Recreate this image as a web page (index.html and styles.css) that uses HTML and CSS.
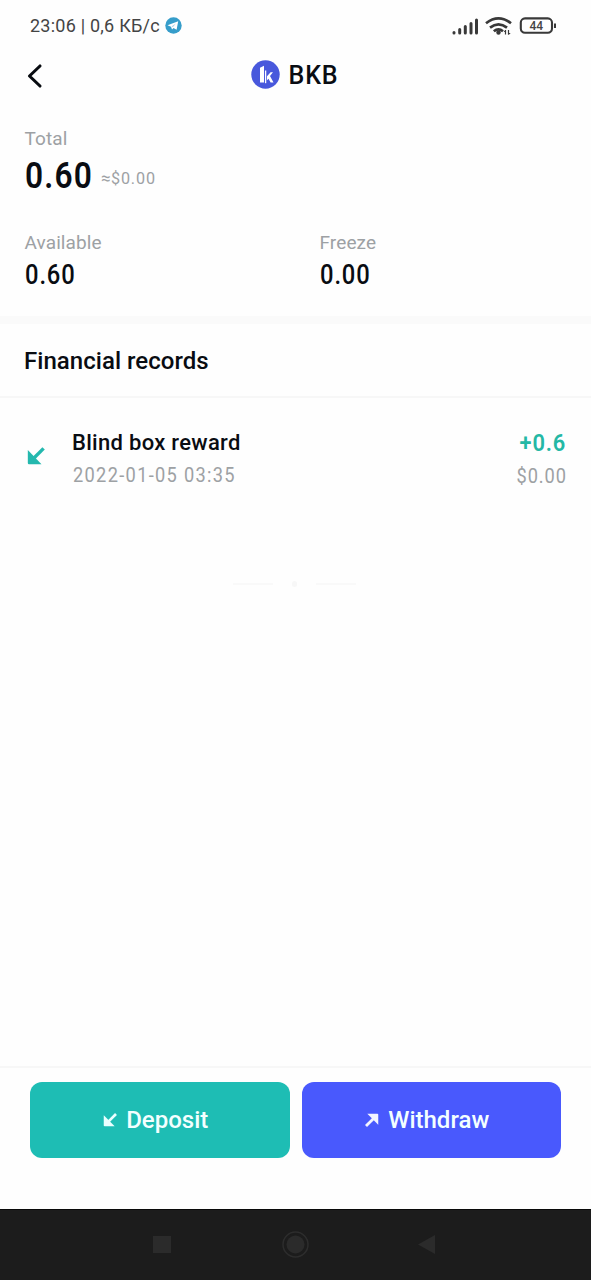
FILE: index.html
```html
<!DOCTYPE html>
<html lang="en">
<head>
<meta charset="utf-8">
<title>BKB</title>
<link rel="stylesheet" href="styles.css">
</head>
<body>
<div class="screen">
  <div class="status">
    <span class="status-text">23:06 | 0,6 КБ/с</span>
    <svg class="telegram" width="17" height="17" viewBox="0 0 17 17"><circle cx="8.5" cy="8.5" r="8.2" fill="#369dca"/><path d="M2.5 8.3 13.2 4.2 11.6 12.8 8.5 10.9 7 12.4 6 9.7Z" fill="#fff"/><path d="M6.5 9.5 10.8 6.5 8 10Z" fill="#a6cfe4"/></svg>
    <svg class="signals" width="108" height="22" viewBox="0 0 108 22">
      <g stroke="#393939" stroke-width="3" stroke-linecap="round"><path d="M3 17.5v.5M8.7 14.5V18M14.3 11.5V18M20 8.5V18M25.5 5V18"/></g>
      <g fill="none" stroke="#393939" stroke-width="2.7"><path d="M35 8.2Q47.5-1.4 60 8.2M39 12.6Q47.5 6 56 12.6M42.8 16.2Q47.5 12.5 52 16.2"/></g>
      <circle cx="47.5" cy="17.5" r="2.2" fill="#393939"/>
      <path d="M54.5 15v4.5M57.5 15v4.5" stroke="#393939" stroke-width="1.2"/><path d="M52.6 17h2v-2.2ZM57.5 20v-2h2.2Z" fill="#393939"/>
      <rect x="69.8" y="3.4" width="31.2" height="14.4" rx="4.2" fill="none" stroke="#393939" stroke-width="2.1"/>
      <path d="M104 8.5v4.5" stroke="#393939" stroke-width="2"/>
      <text x="85.2" y="15" text-anchor="middle" class="battery">44</text>
    </svg>
  </div>
  <header class="header">
    <svg class="back" width="20" height="26" viewBox="0 0 20 26"><path d="M16 3 5.5 13 16 23" fill="none" stroke="#080b10" stroke-width="3.1" stroke-linecap="round" stroke-linejoin="round"/></svg>
    <div class="coin">
      <svg width="29" height="29" viewBox="0 0 29 29"><circle cx="14.5" cy="14.5" r="14.2" fill="#4858dc"/><path d="M9 7.8 13 5.8V22.5H9Z" fill="#fff"/><path d="M14.6 10.5V23.2" stroke="#fff" stroke-width="1.3"/><path d="M16 16.2 19.6 12.3H22L19 16.1 22.5 22.5H19.6L17.5 18.7 16 20.3Z" fill="#fff"/></svg>
      <h1>BKB</h1>
    </div>
  </header>
  <section class="summary">
    <div class="label">Total</div>
    <div class="total"><span class="total-box"><span class="din total-value">0.60</span></span><span class="approx">≈<span class="din approx-value">$0.00</span></span></div>
    <div class="split">
      <div><div class="label">Available</div><div class="din value">0.60</div></div>
      <div><div class="label">Freeze</div><div class="din value">0.00</div></div>
    </div>
  </section>
  <h2>Financial records</h2>
  <main class="records">
    <div class="record">
      <svg class="incoming" width="18" height="18" viewBox="0 0 18 18"><path d="M.8 3V16Q.8 17.2 2 17.2H14.5Z" fill="#24b8ae"/><path d="M6 12 16.6 1.4" stroke="#24b8ae" stroke-width="3.4"/></svg>
      <div class="record-main"><div class="record-title">Blind box reward</div><div class="din record-date">2022-01-05 03:35</div></div>
      <div class="record-side"><div class="din amount">+0.6</div><div class="din fiat">$0.00</div></div>
    </div>
    <div class="end"><i></i><b></b><i></i></div>
  </main>
  <footer class="actions">
    <div class="button deposit"><svg width="14" height="14" viewBox="0 0 18 18"><path d="M1 3 15 17H2Q1 17 1 16Z" fill="#eaffff"/><path d="M6 12 16.7 1.3" stroke="#eaffff" stroke-width="3.4"/></svg><span>Deposit</span></div>
    <div class="button withdraw"><svg width="14" height="14" viewBox="0 0 18 18"><path d="M3 1H16Q17 1 17 2V15Z" fill="#f3f4ff"/><path d="M1.3 16.7 12 6" stroke="#f3f4ff" stroke-width="3.6"/></svg><span>Withdraw</span></div>
  </footer>
  <nav class="system">
    <svg width="591" height="71" viewBox="0 0 591 71"><path d="M0 .5H591" stroke="#090909"/><rect x="153" y="27" width="18" height="17" fill="#2b2b2b"/><circle cx="295.5" cy="35.5" r="12.5" fill="none" stroke="#2d2d2d" stroke-width="1.5"/><circle cx="295.5" cy="35.5" r="9" fill="#2b2b2b"/><path d="M418 35.5 435 26V45Z" fill="#2b2b2b"/></svg>
  </nav>
</div>
</body>
</html>
```
FILE: styles.css
```css
* { box-sizing: border-box; }
body { margin: 0; background: #fff; font-family: Roboto, "Liberation Sans", sans-serif; color: #090c12; }
.screen { width: 591px; height: 1280px; display: flex; flex-direction: column; background: #fefefe; overflow: hidden; }
.status { height: 50px; padding: 1px 32px 0 30px; display: flex; align-items: center; color: #444; }
.status-text { font-size: 18px; width: 130px; white-space: nowrap; letter-spacing: .23px; }
.telegram { margin-left: 5px; }
.signals { margin-left: auto; }
.battery { font: 500 12px Roboto, sans-serif; fill: #444; }
.header { height: 50px; display: grid; grid-template-columns: 60px 1fr 60px; align-items: center; }
.back { margin: 2px 0 0 24px; }
.coin { display: flex; align-items: center; justify-content: center; gap: 8px; height: 50px; padding: 0 1px 2px 0; }
h1 { margin: 3px 0 0; font-size: 25px; line-height: 30px; font-weight: 500; letter-spacing: .9px; }
.summary { height: 224px; padding: 26px 24px 0 25px; border-bottom: 8px solid #fafafa; }
.label { font-size: 19px; line-height: 26px; color: #9da1a4; letter-spacing: .1px; margin-left: -.5px; }
/* Narrowed figures with open tracking */
.din { display: block; width: max-content; transform: scaleX(.88); transform-origin: left center; }
.total { height: 48px; display: flex; align-items: center; }
.total-box { width: 76px; }
.total-value { font-size: 36px; font-weight: 600; line-height: 48px; letter-spacing: 1.3px; }
.approx { display: flex; font-size: 17px; line-height: 24px; color: #9da1a4; margin-top: 3px; }
.approx-value { letter-spacing: .9px; transform: scaleX(.95); }
.split { display: grid; grid-template-columns: 295px 1fr; margin-top: 30px; }
.value { font-size: 27px; font-weight: 500; line-height: 38px; letter-spacing: 1px; }
h2 { margin: 0; padding: 0 24px; height: 74px; border-bottom: 2px solid #f7f7f7; font-size: 24px; font-weight: 500; line-height: 74px; letter-spacing: .04px; }
.records { flex: 1; padding: 28px 25px 0 27px; }
.record { display: flex; height: 66px; }
.incoming { margin-top: 21px; }
.record-main { margin-left: 27px; }
.record-title { font-size: 22px; font-weight: 500; line-height: 34px; letter-spacing: .3px; }
.record-date, .fiat { font-size: 19.5px; line-height: 32px; color: #9da1a4; letter-spacing: 1.4px; }
.record-date { margin-left: 1px; }
.record-date.din, .fiat.din { transform: scaleX(.935); }
.record-side { margin-left: auto; display: flex; flex-direction: column; align-items: flex-end; }
.record-side .din { transform-origin: right center; margin-right: -1px; }
.record-side .amount { color: #24b8a5; font-size: 24px; font-weight: 600; line-height: 34px; letter-spacing: .9px; transform: scaleX(.91); margin-right: 0; }
.fiat { letter-spacing: 1px; line-height: 33px; }
.end { display: flex; align-items: center; justify-content: center; gap: 19px; margin-top: 89px; padding-right: 5px; }
.end i { width: 40px; height: 2px; background: #f9f9f9; }
.end b { width: 5px; height: 6px; border-radius: 3px; background: #f7f7f7; }
.actions { height: 143px; border-top: 2px solid #f7f7f7; padding: 14px 30px 0; display: grid; grid-template-columns: 1fr 1fr; gap: 12px; align-items: start; }
.button { height: 76px; padding-right: 8px; border-radius: 12px; display: flex; align-items: center; justify-content: center; gap: 9px; color: #f3ffff; font-size: 24px; font-weight: 500; }
.deposit { background: #1ebdb4; }
.withdraw { background: #4959fd; }
.system { height: 71px; background: #1c1c1c; }
.system svg { display: block; }
```
